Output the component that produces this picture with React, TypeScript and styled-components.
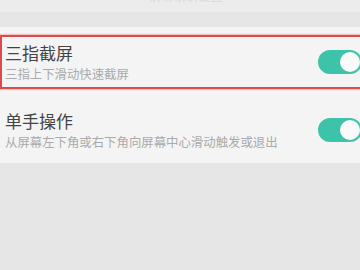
import React from 'react';
import styled, { createGlobalStyle } from 'styled-components';

const GlobalStyle = createGlobalStyle`
  html, body {
    margin: 0;
    padding: 0;
    background: #e6e6e6;
  }
  body {
    font-family: "Noto Sans CJK SC", "Noto Sans", sans-serif;
  }
`;

const settings = [
  {
    title: '三指截屏',
    desc: '三指上下滑动快速截屏',
    on: true,
    marked: true,
  },
  {
    title: '单手操作',
    desc: '从屏幕左下角或右下角向屏幕中心滑动触发或退出',
    on: true,
    marked: false,
  },
];

const App = () => (
  <Page>
    <GlobalStyle />
    <TopStrip>
      <CutText>屏幕录制设置</CutText>
    </TopStrip>
    <Band />
    <Card>
      {settings.map((item) => (
        <Row key={item.title} $marked={item.marked}>
          <Texts>
            <Title>{item.title}</Title>
            <Desc>{item.desc}</Desc>
          </Texts>
          <Toggle $on={item.on} $marked={item.marked}>
            <Knob />
          </Toggle>
        </Row>
      ))}
    </Card>
  </Page>
);

const Page = styled.div`
  width: 360px;
  height: 270px;
  overflow: hidden;
  background: #e6e6e6;
`;

const TopStrip = styled.div`
  height: 12px;
  background: #ececec;
  overflow: hidden;
  padding-left: 150px;
`;

const CutText = styled.div`
  margin-top: -12px;
  font-size: 12px;
  line-height: 16px;
  color: #d8d8d8;
`;

const Band = styled.div`
  height: 15px;
  background: #e6e6e6;
`;

const Card = styled.div`
  background: #f4f4f4;
  padding-top: 8px;
  margin-right: -30px;
`;

const Row = styled.div<{ $marked: boolean }>`
  display: flex;
  align-items: ${({ $marked }) => ($marked ? 'center' : 'flex-start')};
  justify-content: space-between;
  box-sizing: border-box;
  height: ${({ $marked }) => ($marked ? '54px' : '74px')};
  padding: ${({ $marked }) => ($marked ? '0 26px 0 3px' : '21px 28px 0 5px')};
  border: ${({ $marked }) => ($marked ? '2px solid #dc4a4a' : 'none')};
  box-shadow: ${({ $marked }) => ($marked ? '0 0 1px 1px rgba(240, 150, 150, 0.5)' : 'none')};
`;

const Texts = styled.div`
  display: flex;
  flex-direction: column;
`;

const Title = styled.div`
  font-size: 17px;
  line-height: 22px;
  color: #444444;
`;

const Desc = styled.div`
  font-size: 12.4px;
  line-height: 17px;
  color: #aaaaaa;
  margin-top: 2px;
`;

const Toggle = styled.div<{ $on: boolean; $marked: boolean }>`
  display: flex;
  align-items: center;
  justify-content: ${({ $on }) => ($on ? 'flex-end' : 'flex-start')};
  width: 44px;
  height: 24px;
  box-sizing: border-box;
  padding: 0 2px;
  margin-top: ${({ $marked }) => ($marked ? '0' : '8px')};
  border-radius: 12px;
  background: ${({ $on }) => ($on ? '#3cc3a9' : '#cccccc')};
  flex-shrink: 0;
`;

const Knob = styled.div`
  width: 20px;
  height: 20px;
  border-radius: 50%;
  background: #fafafa;
`;

export default App;
